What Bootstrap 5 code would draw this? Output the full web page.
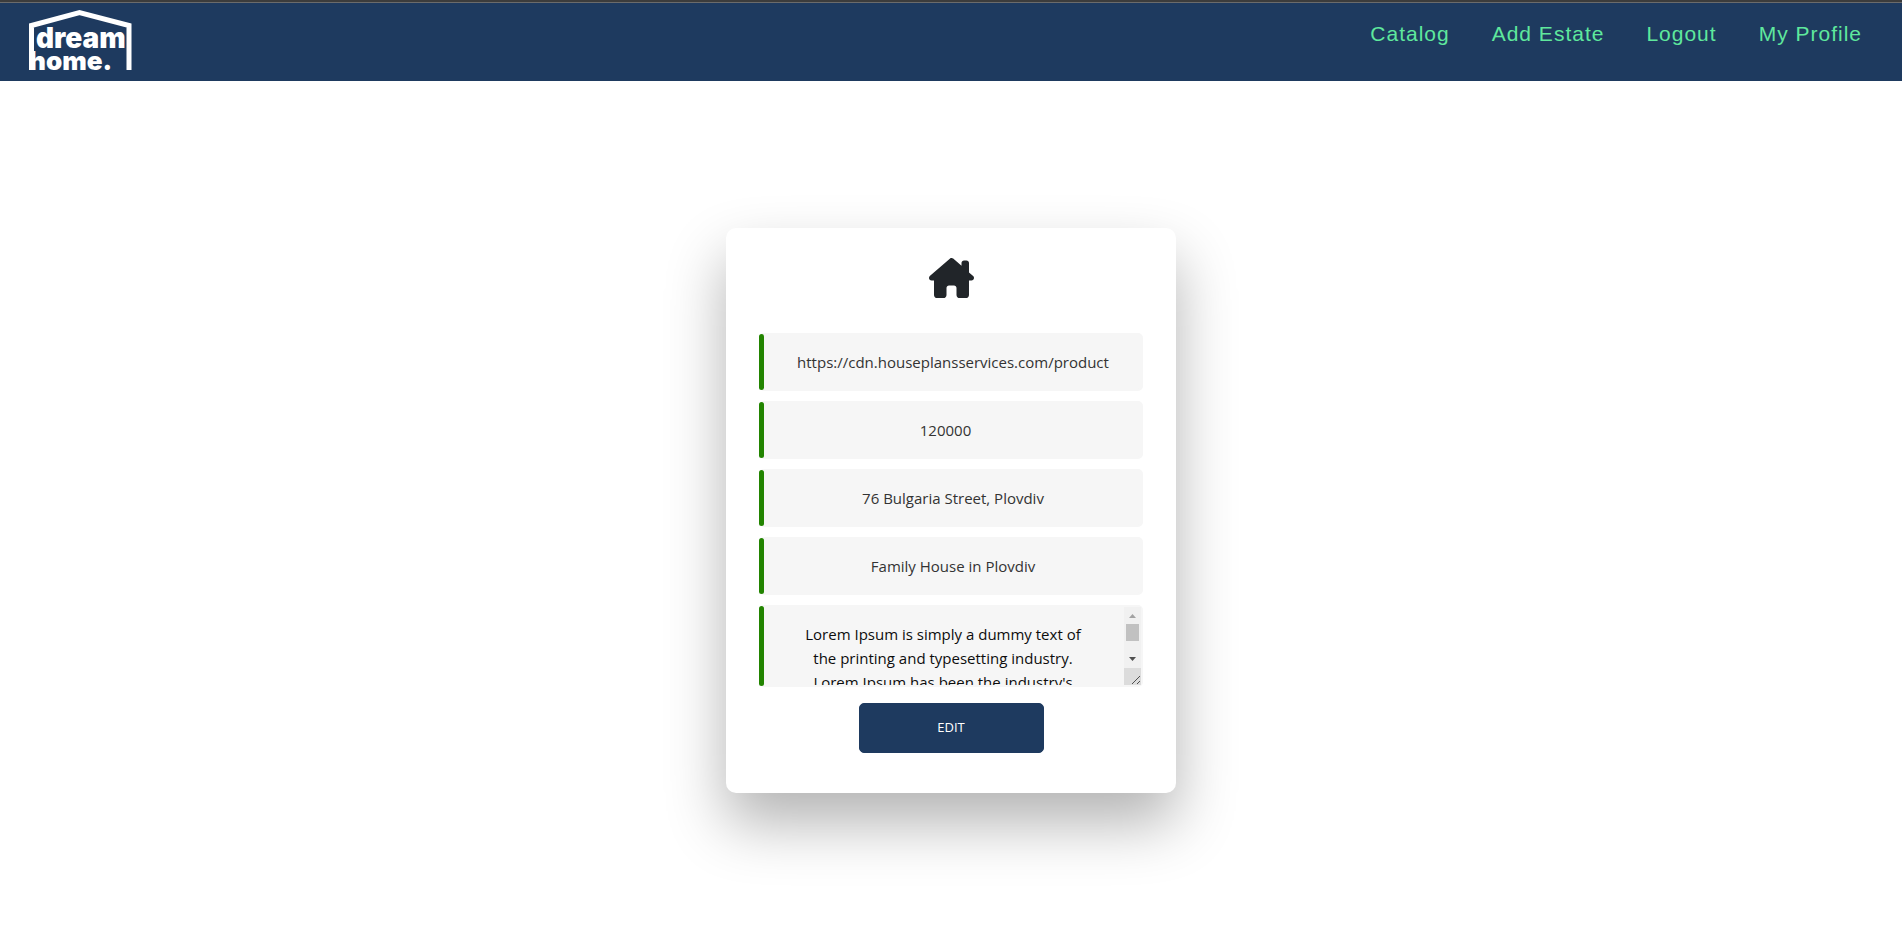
<!DOCTYPE html>
<html lang="en">
<head>
<meta charset="utf-8">
<meta name="viewport" content="width=device-width, initial-scale=1">
<title>Dream Home – Edit Estate</title>
<link href="https://cdn.jsdelivr.net/npm/bootstrap@5.3.0/dist/css/bootstrap.min.css" rel="stylesheet">
<style>
  :root { --navy: #1e3a5f; --mint: #5fe89d; --field: #f6f6f6; }
  body { font-family: "Open Sans", "Noto Sans", sans-serif; background: #fff; }

  .site-header { background: var(--navy); border-top: 2px solid #3c3c3c; box-shadow: inset 0 1px #6b6b6b; height: 81px; }
  .brand-logo { margin-left: 28px; padding-top: 6px; }
  .brand-logo text { font-family: Inter, sans-serif; font-weight: 900; fill: #fff; }
  .site-menu { padding: 17px 19px 0 0; }
  .site-menu .nav-link { font: 21px/30px "Liberation Sans", Arial, sans-serif; letter-spacing: 1px; color: var(--mint); padding: 0 21px; }

  .estate-card { width: 450px; max-width: 100%; margin: 147px 0 120px; padding: 30px 33px 40px; border: 0; border-radius: 10px; box-shadow: 0 30px 60px 0 rgba(0, 0, 0, .3); }
  .house-icon { margin-bottom: 35px; color: #212529; }
  .field-list { gap: 10px; }
  .field-row { position: relative; }
  .field-row::before { content: ""; position: absolute; left: 0; top: 1px; bottom: 1px; width: 5px; border-radius: 3px; background: #228400; z-index: 1; }
  .field-row .form-control { height: 58px; padding: 15px 26px 15px 30px; border: 2px solid var(--field); border-radius: 5px; background: var(--field); color: #333; font-size: 15px; line-height: 24px; text-align: center; }
  .field-row textarea.form-control { display: block; height: 82px; padding: 15px 48px 15px 32px; color: #0d0d0d; resize: none; overflow-y: auto; scrollbar-width: none; }
  .scroll-strip { position: absolute; top: 2px; right: 2px; }

  .btn-edit { width: 185px; height: 50px; margin-top: 16px; border-radius: 5px; font-size: 13px; --bs-btn-bg: var(--navy); --bs-btn-color: #fff; --bs-btn-border-color: var(--navy); --bs-btn-hover-bg: #16304f; --bs-btn-hover-color: #fff; }
</style>
</head>
<body class="min-vh-100">
<header class="site-header d-flex justify-content-between align-items-start">
  <a class="brand-logo d-block" href="#" aria-label="dream home.">
    <svg class="d-block" width="106" height="66" viewBox="28 8 106 66">
      <path d="M31.500 70V25.500L79.500 12.500L129 25.500V70" fill="none" stroke="#fff" stroke-width="5"/>
      <text x="36" y="48" font-size="28">dream</text>
      <text x="29" y="70" font-size="26">home.</text>
    </svg>
  </a>
  <nav class="site-menu nav" aria-label="Main">
    <a class="nav-link" href="#">Catalog</a>
    <a class="nav-link" href="#">Add Estate</a>
    <a class="nav-link" href="#">Logout</a>
    <a class="nav-link" href="#">My Profile</a>
  </nav>
</header>

<main class="d-flex justify-content-center">
  <form class="estate-card card align-items-center">
    <svg class="house-icon" width="45" height="40" viewBox="0 0 576 512" fill="currentColor" aria-hidden="true">
      <path d="M575.800 255.500c0 18-15 32.100-32 32.100h-32V472c0 22.100-17.900 40-40 40H392c-22.100 0-40-17.900-40-40V384c0-17.700-14.300-32-32-32h-64c-17.700 0-32 14.300-32 32v88c0 22.100-17.900 40-40 40h-80c-22.100 0-40-17.900-40-40V287.600H32c-18 0-32-14-32-32.100 0-9 3-17 10-24L266.400 8c7-7 15-8 22-8s15 2 21 7L416 100.700V64c0-17.700 14.300-32 32-32h32c17.700 0 32 14.300 32 32v121l52.800 46.500c8 7 12 15 11 24z"/>
    </svg>
    <div class="field-list d-grid w-100">
      <div class="field-row"><label class="visually-hidden" for="image">Image URL</label><input class="form-control" id="image" type="text" value="https://cdn.houseplansservices.com/product"></div>
      <div class="field-row"><label class="visually-hidden" for="price">Price</label><input class="form-control" id="price" type="number" value="120000"></div>
      <div class="field-row"><label class="visually-hidden" for="address">Address</label><input class="form-control" id="address" type="text" value="76 Bulgaria Street, Plovdiv"></div>
      <div class="field-row"><label class="visually-hidden" for="title">Title</label><input class="form-control" id="title" type="text" value="Family House in Plovdiv"></div>
      <div class="field-row">
        <label class="visually-hidden" for="description">Description</label>
        <textarea class="form-control" id="description">Lorem Ipsum is simply a dummy text of the printing and typesetting industry. Lorem Ipsum has been the industry's standard dummy text ever since the 1500s, when an unknown printer took a galley of type and scrambled it to make a type specimen book.</textarea>
        <svg class="scroll-strip" width="17" height="78" viewBox="0 0 17 78" aria-hidden="true">
          <path fill="#f1f1f1" d="M0 0h17v61H0z"/>
          <path fill="#a3a3a3" d="M5 11L8.500 7L12 11z"/>
          <path fill="#c1c1c1" d="M2 17h13v17H2z"/>
          <path fill="#505050" d="M5 50L8.500 54L12 50z"/>
          <path fill="#dcdcdc" d="M0 61h17v17H0z"/>
          <path stroke="#505050" d="M8 77L16 69M13 77L16 74"/>
        </svg>
      </div>
    </div>
    <button class="btn btn-edit text-uppercase" type="submit">Edit</button>
  </form>
</main>
<script src="https://cdn.jsdelivr.net/npm/bootstrap@5.3.0/dist/js/bootstrap.bundle.min.js"></script>
</body>
</html>
